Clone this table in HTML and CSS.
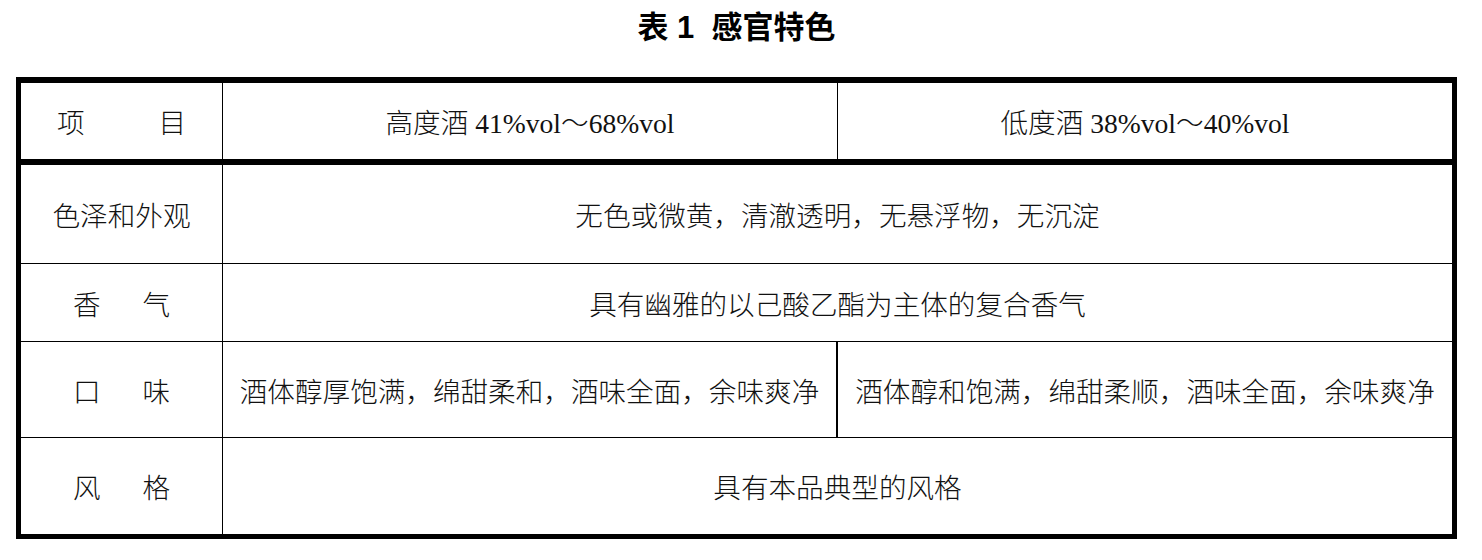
FILE: index.html
```html
<!DOCTYPE html>
<html lang="zh-CN">
<head>
<meta charset="utf-8">
<title>表 1 感官特色</title>
<link rel="stylesheet" href="styles.css">
</head>
<body>
<div class="page">
  <h1 class="title">表 1&nbsp; 感官特色</h1>
  <div class="table">
    <div class="row head">
      <div class="cell c1"><span class="lbl wide"><span>项</span><span>目</span></span></div>
      <div class="cell c2">高度酒 41%vol～68%vol</div>
      <div class="cell c3">低度酒 38%vol～40%vol</div>
    </div>
    <div class="row r2">
      <div class="cell c1">色泽和外观</div>
      <div class="cell span">无色或微黄，清澈透明，无悬浮物，无沉淀</div>
    </div>
    <div class="row r3">
      <div class="cell c1"><span class="lbl"><span>香</span><span>气</span></span></div>
      <div class="cell span">具有幽雅的以己酸乙酯为主体的复合香气</div>
    </div>
    <div class="row r4">
      <div class="cell c1"><span class="lbl"><span>口</span><span>味</span></span></div>
      <div class="cell c2 thick">酒体醇厚饱满，绵甜柔和，酒味全面，余味爽净</div>
      <div class="cell c3">酒体醇和饱满，绵甜柔顺，酒味全面，余味爽净</div>
    </div>
    <div class="row r5">
      <div class="cell c1"><span class="lbl"><span>风</span><span>格</span></span></div>
      <div class="cell span">具有本品典型的风格</div>
    </div>
  </div>
</div>
</body>
</html>
```

FILE: styles.css
```css
* { box-sizing: border-box; }

html, body {
  margin: 0;
  padding: 0;
  background: #ffffff;
}

.page {
  width: 1441px;
  margin-left: 16px;
}

.title {
  margin: 0;
  padding-top: 8px;
  height: 77px;
  line-height: 40px;
  text-align: center;
  font-family: "Liberation Sans", "Noto Sans CJK SC", sans-serif;
  font-size: 31px;
  font-weight: 700;
  color: #000;
  white-space: pre;
}

.table {
  border-style: solid;
  border-color: #000;
  border-width: 6px 5px 5px 5px;
  font-family: "Liberation Serif", "Noto Sans CJK SC", serif;
  font-size: 27.6px;
  font-weight: 300;
  color: #111;
}

.row {
  display: grid;
  grid-template-columns: 202px 615px 1fr;
  border-bottom: 1px solid #000;
}

.row.head {
  height: 82px;
  border-bottom-width: 6px;
}

.row.r2 { height: 99px; }
.row.r3 { height: 78px; }
.row.r4 { height: 96px; }
.row.r5 { height: 96px; border-bottom: 0; }

.cell {
  display: flex;
  align-items: center;
  justify-content: center;
  white-space: nowrap;
}

.c1 { border-right: 1px solid #000; }
.c2 { border-right: 1px solid #000; }
.c2.thick { border-right-width: 2px; }

.span { grid-column: 2 / 4; }

.lbl {
  display: flex;
  gap: 42px;
}

.lbl.wide {
  gap: 74px;
}
```
